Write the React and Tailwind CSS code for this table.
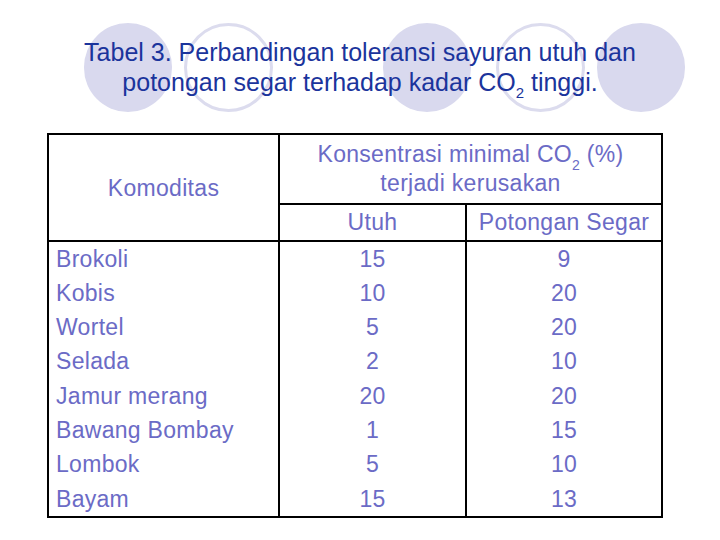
import React from 'react'

const rows = [
  ['Brokoli', '15', '9'],
  ['Kobis', '10', '20'],
  ['Wortel', '5', '20'],
  ['Selada', '2', '10'],
  ['Jamur merang', '20', '20'],
  ['Bawang Bombay', '1', '15'],
  ['Lombok', '5', '10'],
  ['Bayam', '15', '13'],
]

function Filled({ className = '' }) {
  return <div className={`w-[88px] h-[89px] rounded-full bg-[#d9d9ee] ${className}`} />
}

function Ring({ className = '' }) {
  return <div className={`w-[89px] h-[89px] rounded-full border-[3px] border-[#dcdcee] ${className}`} />
}

export default function App() {
  return (
    <div
      className="w-[720px] h-[540px] bg-white overflow-hidden"
      style={{ fontFamily: '"Liberation Sans", Arial, sans-serif' }}
    >
      {/* Title with decorative circles behind */}
      <div className="grid pt-[23px]">
        <div className="col-start-1 row-start-1 flex items-center pl-[84px]">
          <Filled />
          <Ring className="ml-[12px]" />
          <Filled className="ml-[110px]" />
          <Ring className="ml-[25px]" />
          <Filled className="ml-[12px]" />
        </div>
        <div className="col-start-1 row-start-1 self-center text-center text-[25px] leading-[30px] text-[#1b349c] z-10 -mt-[2px]">
          <p>Tabel 3. Perbandingan toleransi sayuran utuh dan</p>
          <p>
            potongan segar terhadap kadar CO<sub className="text-[15px] align-[-4px]">2</sub> tinggi.
          </p>
        </div>
      </div>

      {/* Table */}
      <table className="mt-[21px] ml-[47px] w-[614px] table-fixed border-collapse text-[#6b6bc6] text-[23px] tracking-[0.3px]">
        <colgroup>
          <col className="w-[231px]" />
          <col className="w-[187px]" />
          <col className="w-[196px]" />
        </colgroup>
        <tbody>
          <tr className="h-[70px]">
            <td rowSpan={2} className="border-2 border-black text-center align-middle pt-[2px]">
              Komoditas
            </td>
            <td colSpan={2} className="border-2 border-black text-center align-middle leading-[29px]">
              <div>
                Konsentrasi minimal CO<sub className="text-[14px] align-[-4px]">2</sub> (%)
              </div>
              <div>terjadi kerusakan</div>
            </td>
          </tr>
          <tr className="h-[36px]">
            <td className="border-2 border-black text-center align-middle">Utuh</td>
            <td className="border-2 border-black text-center align-middle">Potongan Segar</td>
          </tr>
          <tr>
            <td className="border-2 border-black align-top pl-[7px] leading-[34.3px]">
              {rows.map(r => (
                <div key={r[0]}>{r[0]}</div>
              ))}
            </td>
            <td className="border-2 border-black align-top text-center leading-[34.3px]">
              {rows.map(r => (
                <div key={r[0]}>{r[1]}</div>
              ))}
            </td>
            <td className="border-2 border-black align-top text-center leading-[34.3px]">
              {rows.map(r => (
                <div key={r[0]}>{r[2]}</div>
              ))}
            </td>
          </tr>
        </tbody>
      </table>
    </div>
  )
}
